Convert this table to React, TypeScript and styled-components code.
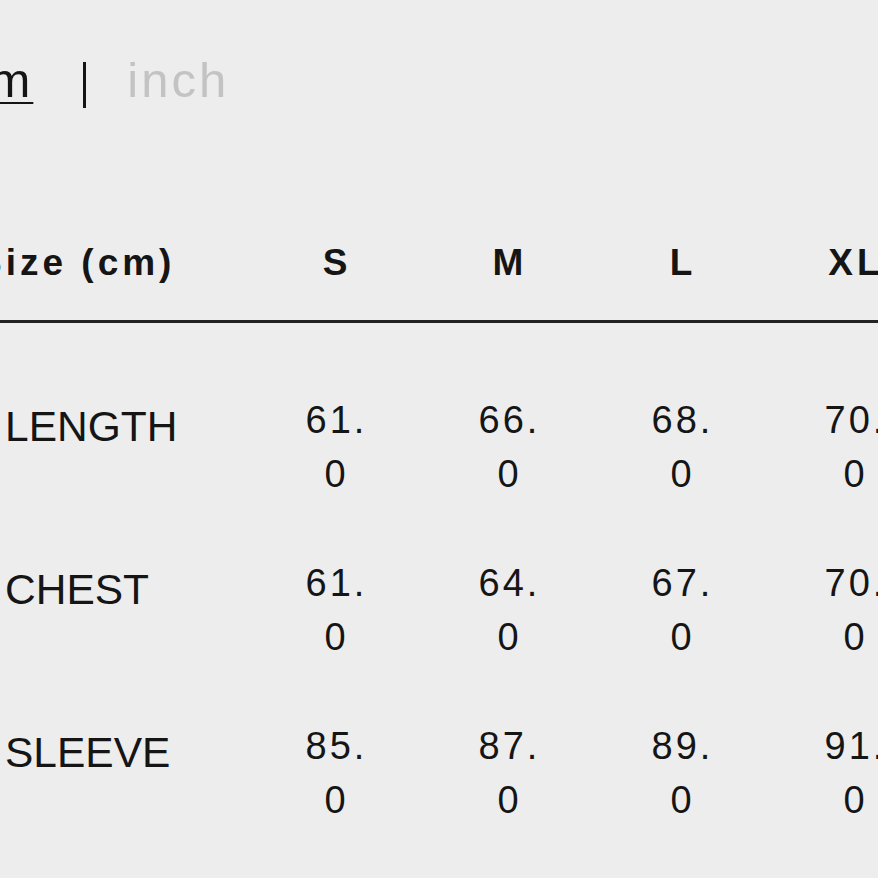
import React from "react";
import styled, { createGlobalStyle } from "styled-components";

const SIZES = ["S", "M", "L", "XL"];

const ROWS = [
  { label: "LENGTH", values: ["61.0", "66.0", "68.0", "70.0"] },
  { label: "CHEST", values: ["61.0", "64.0", "67.0", "70.0"] },
  { label: "SLEEVE", values: ["85.0", "87.0", "89.0", "91.0"] },
];

const GlobalStyle = createGlobalStyle`
  html, body {
    margin: 0;
    padding: 0;
    background: #ededed;
    overflow: hidden;
  }
  body {
    font-family: "Liberation Sans", Arial, sans-serif;
    color: #151515;
  }
`;

const Page = styled.div`
  width: 878px;
  height: 878px;
  overflow: hidden;
  background: #ededed;
`;

const UnitToggle = styled.div`
  display: flex;
  align-items: flex-start;
  margin-left: -38px;
  padding-top: 56px;
  height: 48px;
`;

const Unit = styled.span<{ $active?: boolean }>`
  font-size: 49px;
  line-height: 48px;
  letter-spacing: 3px;
  white-space: nowrap;
  color: ${({ $active }) => ($active ? "#151515" : "#c3c3c3")};
  text-decoration: ${({ $active }) => ($active ? "underline" : "none")};
  text-decoration-thickness: 2px;
  text-underline-offset: 5px;
`;

const Divider = styled.span`
  display: block;
  width: 3px;
  height: 46px;
  margin: 6px 41px 0 50px;
  background: #151515;
`;

const Table = styled.div`
  margin-left: -26px;
  margin-top: 138px;
  width: 966px;
`;

const HeaderRow = styled.div`
  display: grid;
  grid-template-columns: 274.5px repeat(4, 173px);
  padding-top: 2px;
  padding-bottom: 38.5px;
  border-bottom: 3px solid #222;
`;

const HeaderCell = styled.div<{ $first?: boolean }>`
  font-size: 37px;
  line-height: 37px;
  font-weight: 700;
  letter-spacing: 4px;
  white-space: nowrap;
  text-align: ${({ $first }) => ($first ? "left" : "center")};
  padding-left: ${({ $first }) => ($first ? "3px" : "4px")};
`;

const Body = styled.div`
  display: flex;
  flex-direction: column;
  gap: 55px;
  padding-top: 70.5px;
`;

const Row = styled.div`
  display: grid;
  grid-template-columns: 274.5px repeat(4, 173px);
  align-items: start;
`;

const Label = styled.div`
  font-size: 42.5px;
  line-height: 54px;
  padding: 7px 0 0 31px;
  white-space: nowrap;
`;

const ValueCell = styled.div`
  display: flex;
  justify-content: center;
`;

const Value = styled.span`
  width: 72px;
  font-size: 38px;
  line-height: 54px;
  letter-spacing: 3px;
  text-align: center;
  word-break: break-all;
  padding-left: 3px;
`;

export default function App() {
  return (
    <Page>
      <GlobalStyle />
      <UnitToggle>
        <Unit $active>cm</Unit>
        <Divider />
        <Unit>inch</Unit>
      </UnitToggle>

      <Table>
        <HeaderRow>
          <HeaderCell $first>Size (cm)</HeaderCell>
          {SIZES.map((s) => (
            <HeaderCell key={s}>{s}</HeaderCell>
          ))}
        </HeaderRow>

        <Body>
          {ROWS.map((row) => (
            <Row key={row.label}>
              <Label>{row.label}</Label>
              {row.values.map((v, i) => (
                <ValueCell key={i}>
                  <Value>{v}</Value>
                </ValueCell>
              ))}
            </Row>
          ))}
        </Body>
      </Table>
    </Page>
  );
}
